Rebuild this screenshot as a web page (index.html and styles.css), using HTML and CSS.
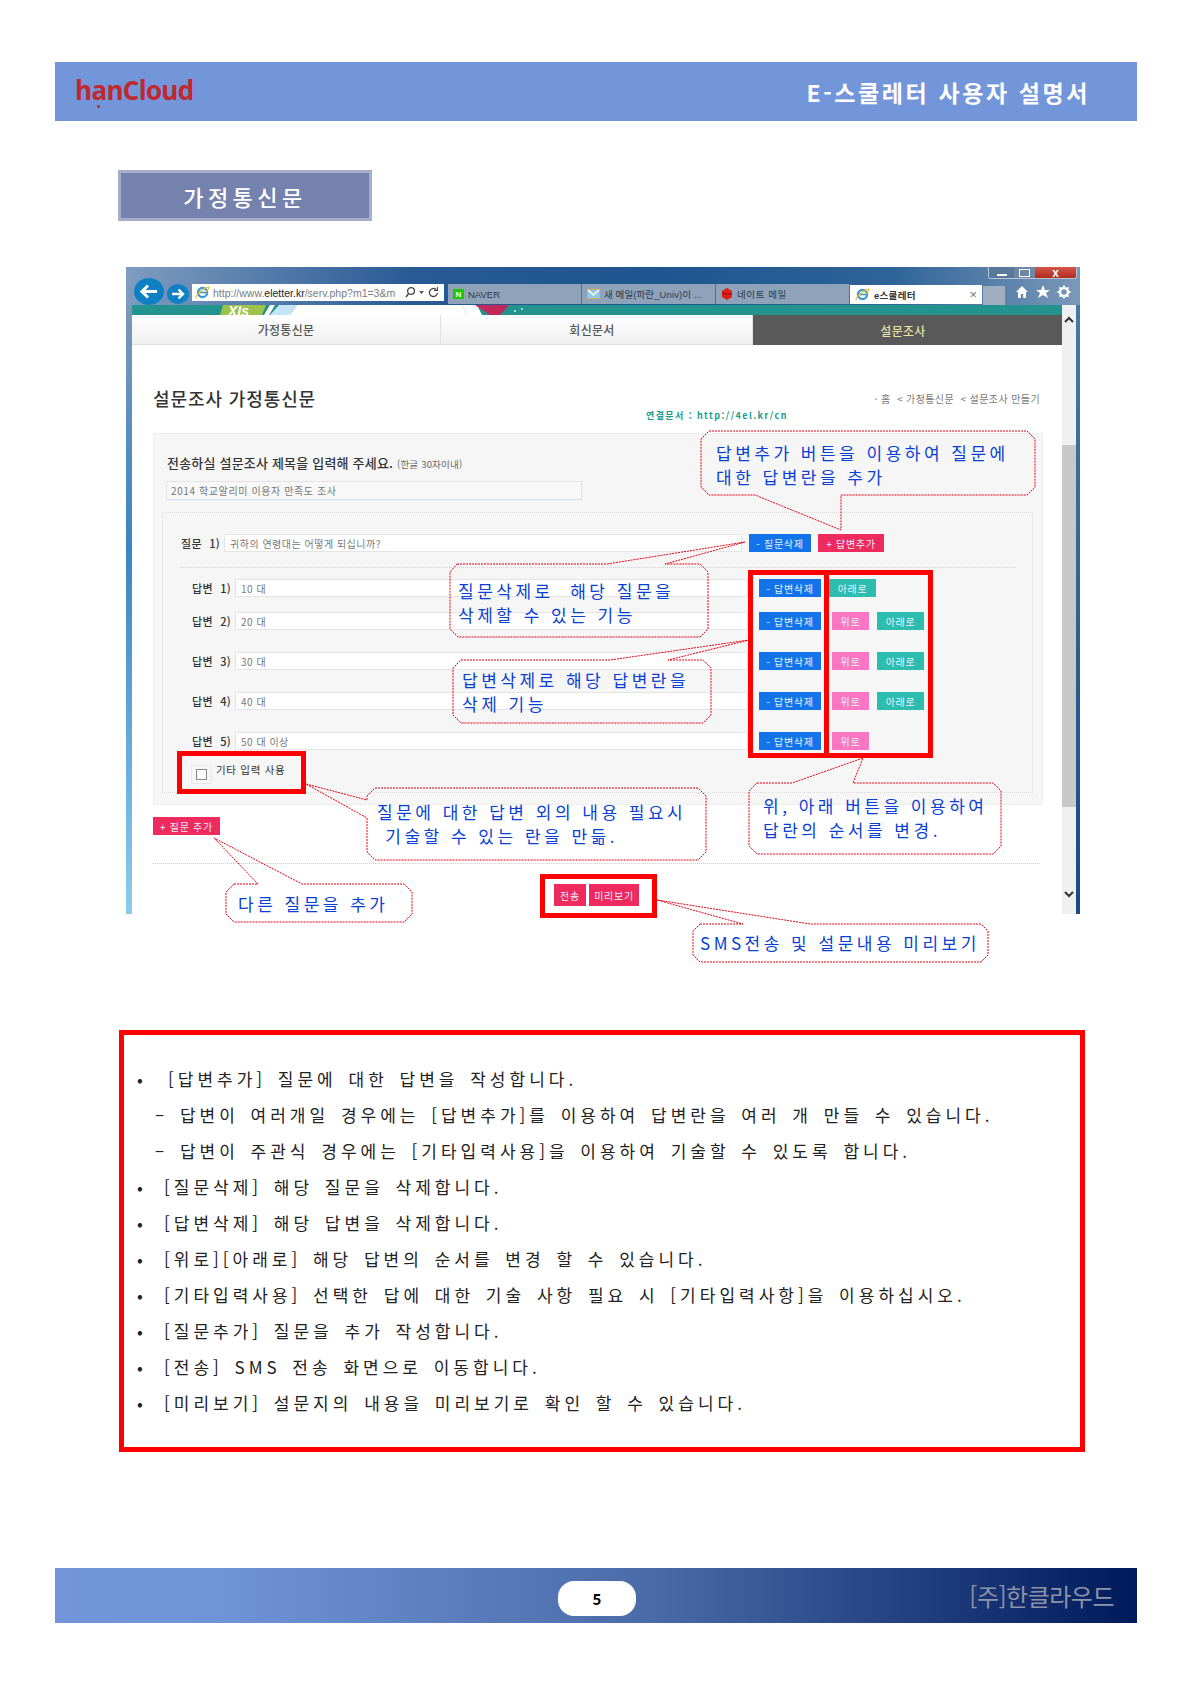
FILE: index.html
```html
<!DOCTYPE html>
<html lang="ko">

<head>
    <meta charset="UTF-8">
    <meta name="viewport" content="width=device-width, initial-scale=1.0">
    <title>E-스쿨레터 사용자 설명서</title>
    <link rel="stylesheet" href="styles.css">
</head>

<body>
    <header class="top-bar">
        <div class="logo">h<span class="logo-a">a</span>nCloud</div>
        <h1 class="doc-title">E-스쿨레터 사용자 설명서</h1>
    </header>

    <h2 class="section-title">가정통신문</h2>

    <div class="figure">
        <div class="window">
            <div class="frame-left"></div>

            <div class="window-main">
                <div class="banner">
                    <svg class="banner-art" width="930" height="10" viewBox="0 0 930 10">
                        <polygon points="91,0 134,0 130,10 88,10" fill="#9cc24a" />
                        <text x="96" y="11" font-family="Liberation Sans" font-weight="bold" font-style="italic" font-size="14" fill="#fff">XIs</text>
                        <polygon points="138,0 143,0 137,10 132,10" fill="#fff" />
                        <polygon points="147,0 165,0 158,10 138,10" fill="#c4e6f4" />
                        <polygon points="165,0 330,0 335,10 158,10" fill="#fff" />
                        <polygon points="330,0 345,0 350,10 335,10" fill="#fff" />
                        <polygon points="343,0 377,0 368,10 358,10" fill="#c2285c" />
                        <circle cx="383" cy="6" r="1" fill="#d8f0ee" />
                        <circle cx="390" cy="4" r="1" fill="#d8f0ee" />
                    </svg>
                </div>

                <nav class="tabs">
                    <div class="tab">가정통신문</div>
                    <div class="tab tab-shift">회신문서</div>
                    <div class="tab tab-shift tab-on">설문조사</div>
                </nav>

                <div class="content">
                    <div class="heading-row">
                        <h3 class="page-heading">설문조사 가정통신문</h3>
                        <div class="breadcrumb">· 홈 &nbsp;&lt; 가정통신문 &nbsp;&lt; 설문조사 만들기</div>
                    </div>
                    <div class="link-row">연결문서 : http://4el.kr/cn</div>

                    <div class="panel">
                        <p class="title-label">전송하실 설문조사 제목을 입력해 주세요. <small>(한글 30자이내)</small></p>
                        <div class="field title-field">2014 학교알리미 이용자 만족도 조사</div>

                        <div class="inner-panel">
                            <div class="question-row">
                                <span class="row-label">질문 1)</span>
                                <div class="field question-field">귀하의 연령대는 어떻게 되십니까?</div>
                                <button class="btn btn-blue btn-q">- 질문삭제</button>
                                <button class="btn btn-red btn-add">+ 답변추가</button>
                            </div>
                            <div class="divider"></div>

                            <div class="answer-row">
                                <span class="row-label">답변 1)</span>
                                <div class="field answer-field">10 대</div>
                                <button class="btn btn-blue btn-del">- 답변삭제</button>
                                <button class="btn btn-teal btn-down first-down">아래로</button>
                            </div>
                            <div class="answer-row tight">
                                <span class="row-label">답변 2)</span>
                                <div class="field answer-field">20 대</div>
                                <button class="btn btn-blue btn-del">- 답변삭제</button>
                                <button class="btn btn-pink btn-up">위로</button>
                                <button class="btn btn-teal btn-down">아래로</button>
                            </div>
                            <div class="answer-row">
                                <span class="row-label">답변 3)</span>
                                <div class="field answer-field">30 대</div>
                                <button class="btn btn-blue btn-del">- 답변삭제</button>
                                <button class="btn btn-pink btn-up">위로</button>
                                <button class="btn btn-teal btn-down">아래로</button>
                            </div>
                            <div class="answer-row">
                                <span class="row-label">답변 4)</span>
                                <div class="field answer-field">40 대</div>
                                <button class="btn btn-blue btn-del">- 답변삭제</button>
                                <button class="btn btn-pink btn-up">위로</button>
                                <button class="btn btn-teal btn-down">아래로</button>
                            </div>
                            <div class="answer-row">
                                <span class="row-label">답변 5)</span>
                                <div class="field answer-field">50 대 이상</div>
                                <button class="btn btn-blue btn-del">- 답변삭제</button>
                                <button class="btn btn-pink btn-up">위로</button>
                            </div>

                            <div class="check-row">
                                <span class="check-wrap"><span class="check-box"></span></span>
                                <span class="check-text">기타 입력 사용</span>
                            </div>
                        </div>
                    </div>

                    <button class="btn btn-red btn-more">+ 질문 추가</button>
                    <div class="divider-wide"></div>
                    <div class="send-row">
                        <button class="btn btn-red btn-send">전송</button>
                        <button class="btn btn-red btn-preview">미리보기</button>
                    </div>
                </div>
            </div>

            <div class="scrollbar">
                <svg class="scroll-arrow" width="14" height="10" viewBox="0 0 14 10">
                    <path d="M3 7 L7 3 L11 7" fill="none" stroke="#333" stroke-width="2" />
                </svg>
                <div class="scroll-thumb"></div>
                <svg class="scroll-arrow scroll-arrow-down" width="14" height="10" viewBox="0 0 14 10">
                    <path d="M3 3 L7 7 L11 3" fill="none" stroke="#333" stroke-width="2" />
                </svg>
            </div>
            <div class="frame-right"></div>

            <!-- browser chrome over the top of the window -->
            <div class="chrome">
                <svg class="nav-back" width="30" height="27" viewBox="0 0 30 27">
                    <ellipse cx="15" cy="13.5" rx="15" ry="13.5" fill="#0f80c4" />
                    <path d="M23 13.5 H9 M14 7.5 L8 13.5 L14 19.5" fill="none" stroke="#fff" stroke-width="3" />
                </svg>
                <svg class="nav-forward" width="22" height="20" viewBox="0 0 22 20">
                    <ellipse cx="11" cy="10" rx="11" ry="10" fill="#0f80c4" />
                    <path d="M5 10 H16 M11.5 5.5 L16 10 L11.5 14.5" fill="none" stroke="#fff" stroke-width="2.4" />
                </svg>
                <div class="address">
                    <svg class="ie-icon" width="15" height="15" viewBox="0 0 15 15">
                        <circle cx="7.5" cy="7.5" r="4.6" fill="#fff" stroke="#3a9ad8" stroke-width="2.2" />
                        <path d="M4 7.5 H11" stroke="#3a9ad8" stroke-width="1.6" />
                        <path d="M1 13 C1 9 10 2 14 2 C14 4 12 6 11 7" fill="none" stroke="#e8b830" stroke-width="1.2" />
                    </svg>
                    <span class="url">http://www.<b>eletter.kr</b>/serv.php?m1=3&amp;m</span>
                    <svg class="addr-tools" width="36" height="13" viewBox="0 0 36 13">
                        <circle cx="6" cy="5" r="3.4" fill="none" stroke="#444" stroke-width="1.3" />
                        <path d="M3.6 7.6 L1 11" stroke="#444" stroke-width="1.5" />
                        <path d="M14 5 H19 L16.5 8 Z" fill="#555" />
                        <path d="M31 3.4 A4 4 0 1 0 32.4 7" fill="none" stroke="#444" stroke-width="1.3" />
                        <path d="M32.4 1 V4.4 H29" fill="none" stroke="#444" stroke-width="1.1" />
                    </svg>
                </div>
                <div class="browser-tab tab-naver"><span class="naver-mark">N</span>NAVER</div>
                <div class="browser-tab tab-mail">
                    <svg width="13" height="10" viewBox="0 0 13 10">
                        <rect x="0.5" y="0.5" width="12" height="9" fill="#8cc8f0" stroke="#e8b030" />
                        <path d="M1 1 L6.5 6 L12 1" fill="none" stroke="#fff" stroke-width="1.6" />
                    </svg>
                    새 메일(파란_Univ)이 ...
                </div>
                <div class="browser-tab tab-nate">
                    <svg width="12" height="12" viewBox="0 0 12 12">
                        <polygon points="6,0 11,3 11,9 6,12 1,9 1,3" fill="#e01c1c" />
                        <path d="M1 6 H11" stroke="#8c0c0c" />
                    </svg>
                    네이트 메일
                </div>
                <div class="browser-tab browser-tab-on">
                    <svg class="ie-icon" width="15" height="15" viewBox="0 0 15 15">
                        <circle cx="7.5" cy="7.5" r="4.6" fill="#fff" stroke="#3a9ad8" stroke-width="2.2" />
                        <path d="M4 7.5 H11" stroke="#3a9ad8" stroke-width="1.6" />
                        <path d="M1 13 C1 9 10 2 14 2 C14 4 12 6 11 7" fill="none" stroke="#e8b830" stroke-width="1.2" />
                    </svg>
                    <span class="active-name">e스쿨레터</span><span class="tab-close">×</span>
                </div>
                <div class="new-tab"></div>
                <svg class="chrome-icons" width="62" height="16" viewBox="0 0 62 16">
                    <path d="M1 8 L7 2 L13 8 H11 V14 H8.2 V10 H5.8 V14 H3 V8 Z" fill="#fff" />
                    <path d="M28 1 L30 6 H35 L31 9 L33 14 L28 11 L23 14 L25 9 L21 6 H26 Z" fill="#fff" />
                    <circle cx="49" cy="8" r="4" fill="none" stroke="#fff" stroke-width="2.4" />
                    <path d="M49 1.5 V4 M49 12 V14.5 M42.5 8 H45 M53 8 H55.5 M44.4 3.4 L46.2 5.2 M51.8 10.8 L53.6 12.6 M44.4 12.6 L46.2 10.8 M51.8 5.2 L53.6 3.4" stroke="#fff" stroke-width="1.8" />
                </svg>
                <div class="win-buttons">
                    <span class="win-btn win-min"></span>
                    <span class="win-btn win-max"></span>
                    <span class="win-btn win-close">x</span>
                </div>
            </div>
        </div>

        <!-- red annotations drawn over the screenshot, in page coordinates -->
        <svg class="marks" width="964" height="763" viewBox="126 267 964 763">
            <g class="callout">
                <path d="M709 431 H1027 L1035 439 V487 L1027 495 H841 V530 L755 495 H709 L701 487 V439 Z" />
                <path d="M457 564 H607 L745 542 L665 564 H700 L708 572 V629 L700 637 H458 L450 629 V572 Z" />
                <path d="M461 660 H610 L749 640 L668 660 H703 L711 668 V715 L703 723 H461 L453 715 V668 Z" />
                <path d="M757 783 H792 L863 758 L853 783 H993 L1001 791 V846 L993 854 H757 L749 846 V791 Z" />
                <path d="M375 788 H698 L706 796 V852 L698 860 H375 L367 852 V818 L306 784 L367 800 V796 Z" />
                <path d="M234 884 H258 L214 838 L302 884 H404 L412 892 V914 L404 922 H234 L226 914 V892 Z" />
                <path d="M700 924 H743 L657 900 L810 924 H981 L988 931 V955 L981 962 H700 L693 955 V931 Z" />
            </g>
        </svg>
        <div class="red-box box-buttons"><div class="box-split"></div></div>
        <div class="red-box box-check"></div>
        <div class="red-box box-send"></div>

        <p class="note note-add">답변추가 버튼을 이용하여 질문에<br>대한 답변란을 추가</p>
        <p class="note note-qdel">질문삭제로&nbsp; 해당 질문을<br>삭제할 수 있는 기능</p>
        <p class="note note-adel">답변삭제로 해당 답변란을<br>삭제 기능</p>
        <p class="note note-order">위, 아래 버튼을 이용하여<br>답란의 순서를 변경.</p>
        <p class="note note-etc">질문에 대한 답변 외의 내용 필요시<br>&nbsp;기술할 수 있는 란을 만듦.</p>
        <p class="note note-more">다른 질문을 추가</p>
        <p class="note note-sms">SMS전송 및 설문내용 미리보기</p>
    </div>

    <ul class="help-box">
        <li class="first">[답변추가] 질문에 대한 답변을 작성합니다.</li>
        <li class="sub">– 답변이 여러개일 경우에는 [답변추가]를 이용하여 답변란을 여러 개 만들 수 있습니다.</li>
        <li class="sub">– 답변이 주관식 경우에는 [기타입력사용]을 이용하여 기술할 수 있도록 합니다.</li>
        <li>[질문삭제] 해당 질문을 삭제합니다.</li>
        <li>[답변삭제] 해당 답변을 삭제합니다.</li>
        <li>[위로][아래로] 해당 답변의 순서를 변경 할 수 있습니다.</li>
        <li>[기타입력사용] 선택한 답에 대한 기술 사항 필요 시 [기타입력사항]을 이용하십시오.</li>
        <li>[질문추가] 질문을 추가 작성합니다.</li>
        <li>[전송] SMS 전송 화면으로 이동합니다.</li>
        <li>[미리보기] 설문지의 내용을 미리보기로 확인 할 수 있습니다.</li>
    </ul>

    <footer class="bottom-bar">
        <div class="page-no">5</div>
        <div class="company">[주]한클라우드</div>
    </footer>
</body>

</html>
```

FILE: styles.css
```css
* {
    box-sizing: border-box;
    margin: 0;
    padding: 0;
}

body {
    width: 1190px;
    height: 1684px;
    overflow: hidden;
    position: relative;
    background: white;
    font-family: "Noto Sans CJK KR", "Noto Sans", sans-serif;
}

/* header */
.top-bar {
    display: flex;
    justify-content: space-between;
    align-items: center;
    height: 59px;
    margin: 62px 53px 0 55px;
    padding: 0 47px 0 20px;
    background-color: #7396db;
}

.logo {
    font-family: "Open Sans", sans-serif;
    font-size: 26px;
    font-weight: 700;
    letter-spacing: -0.7px;
    color: #c1272d;
    position: relative;
    top: -2px;
}

.logo-a {
    position: relative;
}

.logo-a::after {
    content: "";
    position: absolute;
    left: 6px;
    bottom: 0;
    width: 3px;
    height: 3px;
    border-radius: 50%;
    background: #c1272d;
}

.doc-title {
    font-size: 23px;
    font-weight: 700;
    letter-spacing: 2.6px;
    color: white;
}

.section-title {
    display: flex;
    align-items: center;
    justify-content: center;
    width: 254px;
    height: 51px;
    margin: 49px 0 0 118px;
    font-size: 22px;
    font-weight: 500;
    letter-spacing: 4.5px;
    color: white;
    background-color: #7682ae;
    border: 3px solid #a6aecb;
}

/* screenshot and annotations */
.figure {
    position: relative;
    width: 964px;
    height: 763px;
    margin: 46px 0 0 126px;
}

.window {
    position: relative;
    display: flex;
    width: 954px;
    height: 647px;
    padding-top: 38px;
    background: linear-gradient(90deg, #7f9cc0 0%, #285a94 30%, #1f5590 55%, #2d6398 80%, #7b98b8 100%);
    overflow: hidden;
}

.frame-left {
    width: 6px;
    background: linear-gradient(180deg, #7b98b8 0%, #3a86c4 40%, #8ccbec 100%);
}

.frame-right {
    width: 4px;
    background: linear-gradient(180deg, #4a78a8, #1c4a80);
}

.window-main {
    display: flex;
    flex-direction: column;
    width: 930px;
    background: white;
}

.banner {
    height: 10px;
    background-color: #23938f;
}

.banner-art {
    display: block;
}

.tabs {
    display: grid;
    grid-template-columns: 309px 312px 309px;
    height: 30px;
}

.tab {
    display: flex;
    align-items: center;
    justify-content: center;
    font-size: 12px;
    font-weight: 500;
    letter-spacing: 0.3px;
    color: #555;
    background: linear-gradient(180deg, #fff, #efefef);
    border-bottom: 1px solid #ddd;
    border-right: 1px solid #e2e2e2;
}

.tab-shift {
    padding-right: 9px;
}

.tab-on {
    color: #e6e2a2;
    background: #595959;
    border: 0;
}

.content {
    padding: 0 19px 0 21px;
}

.heading-row {
    display: flex;
    justify-content: space-between;
    align-items: center;
    height: 20px;
    margin-top: 43px;
    padding-right: 3px;
}

.page-heading {
    font-size: 18px;
    font-weight: 500;
    letter-spacing: 0.9px;
    color: #333;
}

.breadcrumb {
    font-size: 10px;
    letter-spacing: 0.4px;
    color: #777;
}

.link-row {
    height: 12px;
    margin: 2px 0 0 493px;
    font-size: 9px;
    line-height: 12px;
    font-weight: 700;
    letter-spacing: 1.4px;
    color: #1a9c90;
}

.panel {
    height: 372px;
    margin-top: 11px;
    padding: 22px 9px 0 13px;
    background: #f6f6f6;
    border: 1px solid #eeeeee;
}

.title-label {
    height: 14px;
    font-size: 13px;
    line-height: 14px;
    font-weight: 500;
    letter-spacing: 0.2px;
    color: #333;
}

.title-label small {
    font-size: 9.5px;
    font-weight: 400;
    color: #666;
}

.field {
    display: flex;
    align-items: center;
    height: 18px;
    padding-left: 5px;
    font-size: 10px;
    letter-spacing: 0.5px;
    color: #777;
    background: white;
    border: 1px solid #e4e4e4;
}

.title-field {
    width: 416px;
    height: 19px;
    margin: 11px 0 0 -1px;
    padding-left: 4px;
    letter-spacing: 0.6px;
    background: #f8f8f8;
    border-right-color: #cfe2f0;
    border-bottom-color: #cfe2f0;
}

.inner-panel {
    width: 871px;
    height: 281px;
    margin: 12px 0 0 -5px;
    padding-top: 21px;
    border: 1px dotted #dcdcdc;
}

.question-row {
    display: flex;
    align-items: center;
    padding-left: 18px;
}

.row-label {
    width: 43px;
    flex-shrink: 0;
    font-size: 11px;
    font-weight: 500;
    letter-spacing: 0.3px;
    word-spacing: 4px;
    white-space: nowrap;
    color: #333;
}

.question-field {
    width: 518px;
    margin-right: 7px;
}

.divider {
    width: 836px;
    margin: 15px 0 0 17px;
    border-top: 1px dotted #d0d0d0;
}

.answer-row {
    display: flex;
    align-items: center;
    height: 18px;
    margin-top: 22px;
    padding-left: 29px;
}

.answer-row:nth-child(3) {
    margin-top: 11px;
}

.answer-row.tight {
    margin-top: 15px;
}

.answer-field {
    width: 513px;
    margin-right: 11px;
}

.check-row {
    display: flex;
    align-items: flex-start;
    margin: 15px 0 0 28px;
}

.check-wrap {
    display: flex;
    align-items: center;
    justify-content: center;
    width: 21px;
    height: 19px;
    border: 1px solid #e8e8e8;
}

.check-box {
    width: 11px;
    height: 11px;
    background: white;
    border: 1px solid #888;
}

.check-text {
    margin: -3px 0 0 4px;
    font-size: 10.5px;
    letter-spacing: 0.7px;
    color: #333;
}

/* buttons */
.btn {
    display: flex;
    align-items: center;
    justify-content: center;
    height: 18px;
    flex-shrink: 0;
    font-family: inherit;
    font-size: 10px;
    letter-spacing: 0.7px;
    white-space: nowrap;
    color: #e8eefc;
    border: 0;
}

.btn-blue {
    background: #1273ea;
}

.btn-red {
    background: #ee2a5f;
}

.btn-teal {
    background: #2dbcae;
}

.btn-pink {
    background: #fb76c0;
}

.btn-q,
.btn-del {
    width: 62px;
}

.btn-add {
    width: 66px;
    margin-left: 7px;
}

.btn-up {
    width: 37px;
    margin-left: 11px;
}

.btn-down {
    width: 47px;
    margin-left: 8px;
}

.btn-more {
    width: 67px;
    margin-top: 12px;
}

.divider-wide {
    width: 887px;
    margin-top: 28px;
    border-top: 1px dotted #cccccc;
}

.send-row {
    display: flex;
    gap: 3px;
    margin: 20px 0 0 401px;
}

.btn-send {
    width: 32px;
    height: 22px;
}

.btn-preview {
    width: 50px;
    height: 22px;
}

/* scrollbar */
.scrollbar {
    position: relative;
    width: 14px;
    background: #f0f0f0;
}

.scroll-arrow {
    position: absolute;
    top: 10px;
    left: 0;
}

.scroll-arrow-down {
    top: 584px;
}

.scroll-thumb {
    position: absolute;
    top: 140px;
    left: 0;
    width: 14px;
    height: 362px;
    background: #c8c8c8;
}

/* browser chrome */
.chrome {
    position: absolute;
    top: 0;
    left: 0;
    display: flex;
    align-items: flex-end;
    width: 954px;
    height: 38px;
    padding-left: 8px;
    font-family: "Liberation Sans", "Noto Sans CJK KR", sans-serif;
}

.nav-back {
    margin-bottom: 0;
}

.nav-forward {
    margin: 0 3px 1px 3px;
}

.address {
    display: flex;
    align-items: center;
    gap: 3px;
    width: 252px;
    height: 17px;
    margin-bottom: 4px;
    padding-left: 3px;
    font-size: 10.5px;
    color: #7b7b7b;
    background: white;
}

.ie-icon {
    flex-shrink: 0;
}

.url {
    flex: 1;
    white-space: nowrap;
    overflow: hidden;
}

.url b {
    font-weight: 400;
    color: #222;
}

.addr-tools {
    flex-shrink: 0;
    margin-right: 3px;
}

.browser-tab {
    display: flex;
    align-items: center;
    gap: 4px;
    width: 134px;
    height: 20px;
    margin-bottom: 1px;
    padding-left: 5px;
    font-size: 9.5px;
    white-space: nowrap;
    color: #2b3a4c;
    background: #8ea2b9;
    border-right: 1px solid #53708f;
}

.tab-naver {
    margin-left: 4px;
}

.tab-mail {
    letter-spacing: 0.1px;
}

.tab-nate {
    letter-spacing: 0.6px;
}

.naver-mark {
    display: flex;
    align-items: center;
    justify-content: center;
    width: 11px;
    height: 10px;
    font-size: 8px;
    font-weight: 700;
    color: white;
    background: #1ec800;
}

.browser-tab-on {
    width: 132px;
    height: 19px;
    margin-bottom: 1px;
    background: white;
    border: 0;
}

.active-name {
    flex: 1;
    font-weight: 700;
    letter-spacing: 0.3px;
    color: #333;
}

.tab-close {
    padding-right: 5px;
    font-size: 13px;
    color: #777;
}

.new-tab {
    width: 22px;
    height: 19px;
    margin: 0 10px 0 1px;
    background: #a0afc0;
}

.chrome-icons {
    margin-bottom: 5px;
}

.win-buttons {
    position: absolute;
    top: 0;
    right: 3px;
    display: flex;
    height: 12px;
    border: 1px solid #b8c6d6;
    border-top: 0;
    border-radius: 0 0 3px 3px;
    overflow: hidden;
}

.win-btn {
    display: flex;
    align-items: center;
    justify-content: center;
    width: 25px;
    font-size: 12px;
    font-weight: 700;
    color: white;
}

.win-min {
    background: #5a7899;
}

.win-min::after {
    content: "";
    width: 10px;
    height: 2px;
    margin-top: 5px;
    background: white;
}

.win-max {
    width: 21px;
    background: #6c88a6;
}

.win-max::after {
    content: "";
    width: 9px;
    height: 6px;
    border: 1px solid white;
}

.win-close {
    width: 41px;
    line-height: 8px;
    background: linear-gradient(180deg, #d2584a, #b22a1e);
}

/* annotations */
.marks {
    position: absolute;
    top: 0;
    left: 0;
}

.callout path {
    fill: none;
    stroke: #e8000e;
    stroke-width: 1;
    stroke-dasharray: 2 1;
}

.red-box {
    position: absolute;
    border: 5px solid #ff0000;
}

.box-buttons {
    left: 622px;
    top: 303px;
    width: 185px;
    height: 188px;
}

.box-split {
    position: absolute;
    left: 71px;
    top: 0;
    width: 5px;
    height: 100%;
    background: #ff0000;
}

.box-check {
    left: 51px;
    top: 484px;
    width: 129px;
    height: 43px;
}

.box-send {
    left: 414px;
    top: 607px;
    width: 117px;
    height: 44px;
}

.note {
    position: absolute;
    font-size: 17px;
    line-height: 24px;
    letter-spacing: 3.5px;
    white-space: nowrap;
    color: #0a3fd4;
}

.note-add {
    left: 590px;
    top: 174px;
}

.note-qdel {
    left: 332px;
    top: 312px;
}

.note-adel {
    left: 336px;
    top: 401px;
}

.note-order {
    left: 637px;
    top: 527px;
}

.note-etc {
    left: 251px;
    top: 533px;
}

.note-more {
    left: 112px;
    top: 625px;
}

.note-sms {
    left: 574px;
    top: 664px;
}

/* help text */
.help-box {
    width: 966px;
    height: 422px;
    margin: 0 0 0 119px;
    padding: 26px 0 0 13px;
    list-style: none;
    border: 5px solid #ff0000;
}

.help-box li {
    display: flex;
    height: 36px;
    font-size: 17px;
    line-height: 36px;
    letter-spacing: 4px;
    word-spacing: 3px;
    white-space: pre;
    color: #222;
}

.help-box li::before {
    content: "•";
    width: 27px;
    flex-shrink: 0;
}

.help-box li.first::before {
    width: 31px;
}

.help-box li.sub {
    padding-left: 18px;
}

.help-box li.sub::before {
    content: none;
}

/* footer */
.bottom-bar {
    position: absolute;
    top: 1568px;
    left: 55px;
    display: flex;
    align-items: center;
    width: 1082px;
    height: 55px;
    padding-left: 503px;
    background: linear-gradient(90deg, #7396db 0%, #7094d8 15%, #4a6ba8 55%, #001a5c 100%);
}

.page-no {
    display: flex;
    align-items: center;
    justify-content: center;
    width: 78px;
    height: 35px;
    margin-top: 5px;
    font-size: 15px;
    font-weight: 700;
    color: black;
    background: white;
    border-radius: 16px;
}

.company {
    margin-left: auto;
    margin-right: 23px;
    font-size: 24px;
    letter-spacing: -0.5px;
    color: #8d93a8;
}
```
